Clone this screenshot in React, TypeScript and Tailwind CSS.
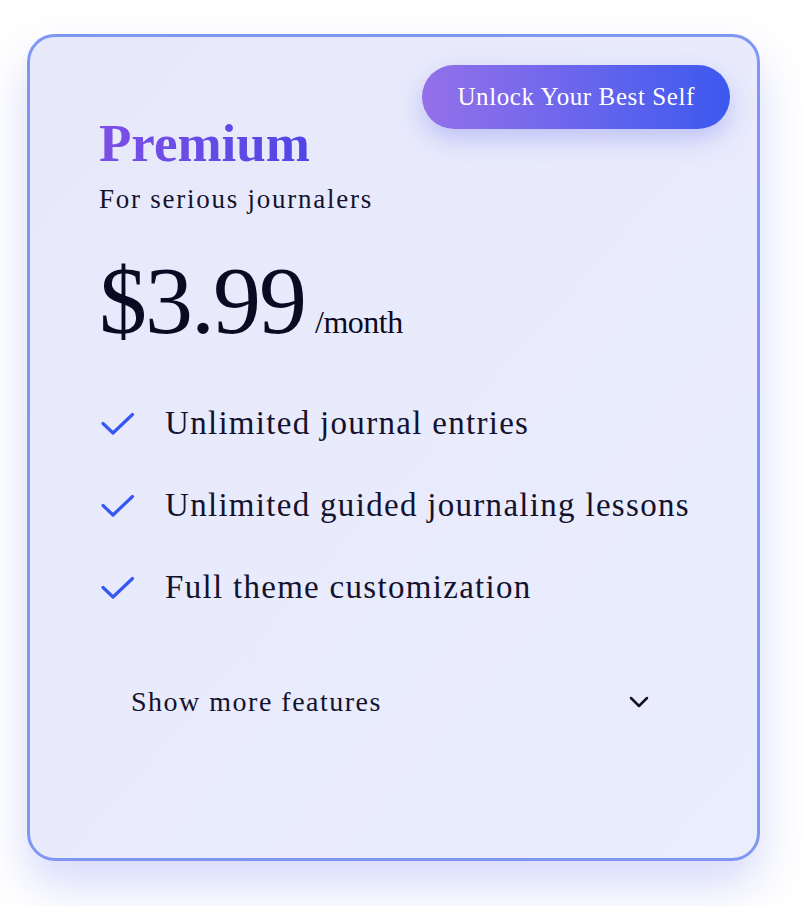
const features = [
  "Unlimited journal entries",
  "Unlimited guided journaling lessons",
  "Full theme customization",
];

function CheckMark() {
  return (
    <svg width="34" height="24" viewBox="0 0 34 24" fill="none" className="shrink-0">
      <polyline
        points="2,11.5 12,21 31.5,2.5"
        stroke="#3658f2"
        strokeWidth="3.2"
        strokeLinecap="round"
        strokeLinejoin="round"
      />
    </svg>
  );
}

function Chevron() {
  return (
    <svg width="20" height="12" viewBox="0 0 20 12" fill="none">
      <polyline
        points="2,2 10,10 18,2"
        stroke="#14122e"
        strokeWidth="2.5"
        strokeLinecap="round"
        strokeLinejoin="round"
      />
    </svg>
  );
}

export default function App() {
  return (
    <div className="min-h-screen bg-white pl-[27px] pt-[34px] font-['Liberation_Serif',serif]">
      <div className="relative h-[827px] w-[733px] rounded-[28px] border-[3px] border-[#7f97f2] bg-gradient-to-br from-[#e7e9fb] to-[#eaedfc] pl-[69px] pt-[80px] shadow-[0_24px_45px_rgba(90,110,240,0.25)]">
        <div className="absolute right-[27px] top-[28px] flex h-[64px] items-center rounded-full bg-gradient-to-r from-[#9470e9] to-[#3a58ef] px-[35px] text-[25px] tracking-[0.6px] text-white shadow-[0_10px_24px_rgba(90,100,240,0.3)]">
          Unlock Your Best Self
        </div>

        <h1 className="inline-block bg-gradient-to-r from-[#7c4fe6] to-[#4f46e6] bg-clip-text text-[53px] leading-none font-bold text-transparent">
          Premium
        </h1>
        <p className="mt-[16px] text-[27px] leading-none tracking-[1.75px] text-[#14122e]">
          For serious journalers
        </p>

        <div className="mt-[40px] flex items-baseline gap-[10px] text-[#0c0a22]">
          <span className="text-[96px] leading-none tracking-[-2px]">$3.99</span>
          <span className="text-[32px] leading-none tracking-[-0.5px]">/month</span>
        </div>

        <ul className="mt-[58px] flex flex-col gap-[49px]">
          {features.map((f) => (
            <li key={f} className="flex items-center gap-[30px] pl-[2px]">
              <CheckMark />
              <span className="text-[33px] leading-none tracking-[1.3px] text-[#14122e]">{f}</span>
            </li>
          ))}
        </ul>

        <button className="mt-[84px] flex w-[582px] items-center justify-between px-[32px] text-[28px] leading-none tracking-[1.5px] text-[#14122e]">
          <span>Show more features</span>
          <Chevron />
        </button>
      </div>
    </div>
  );
}
